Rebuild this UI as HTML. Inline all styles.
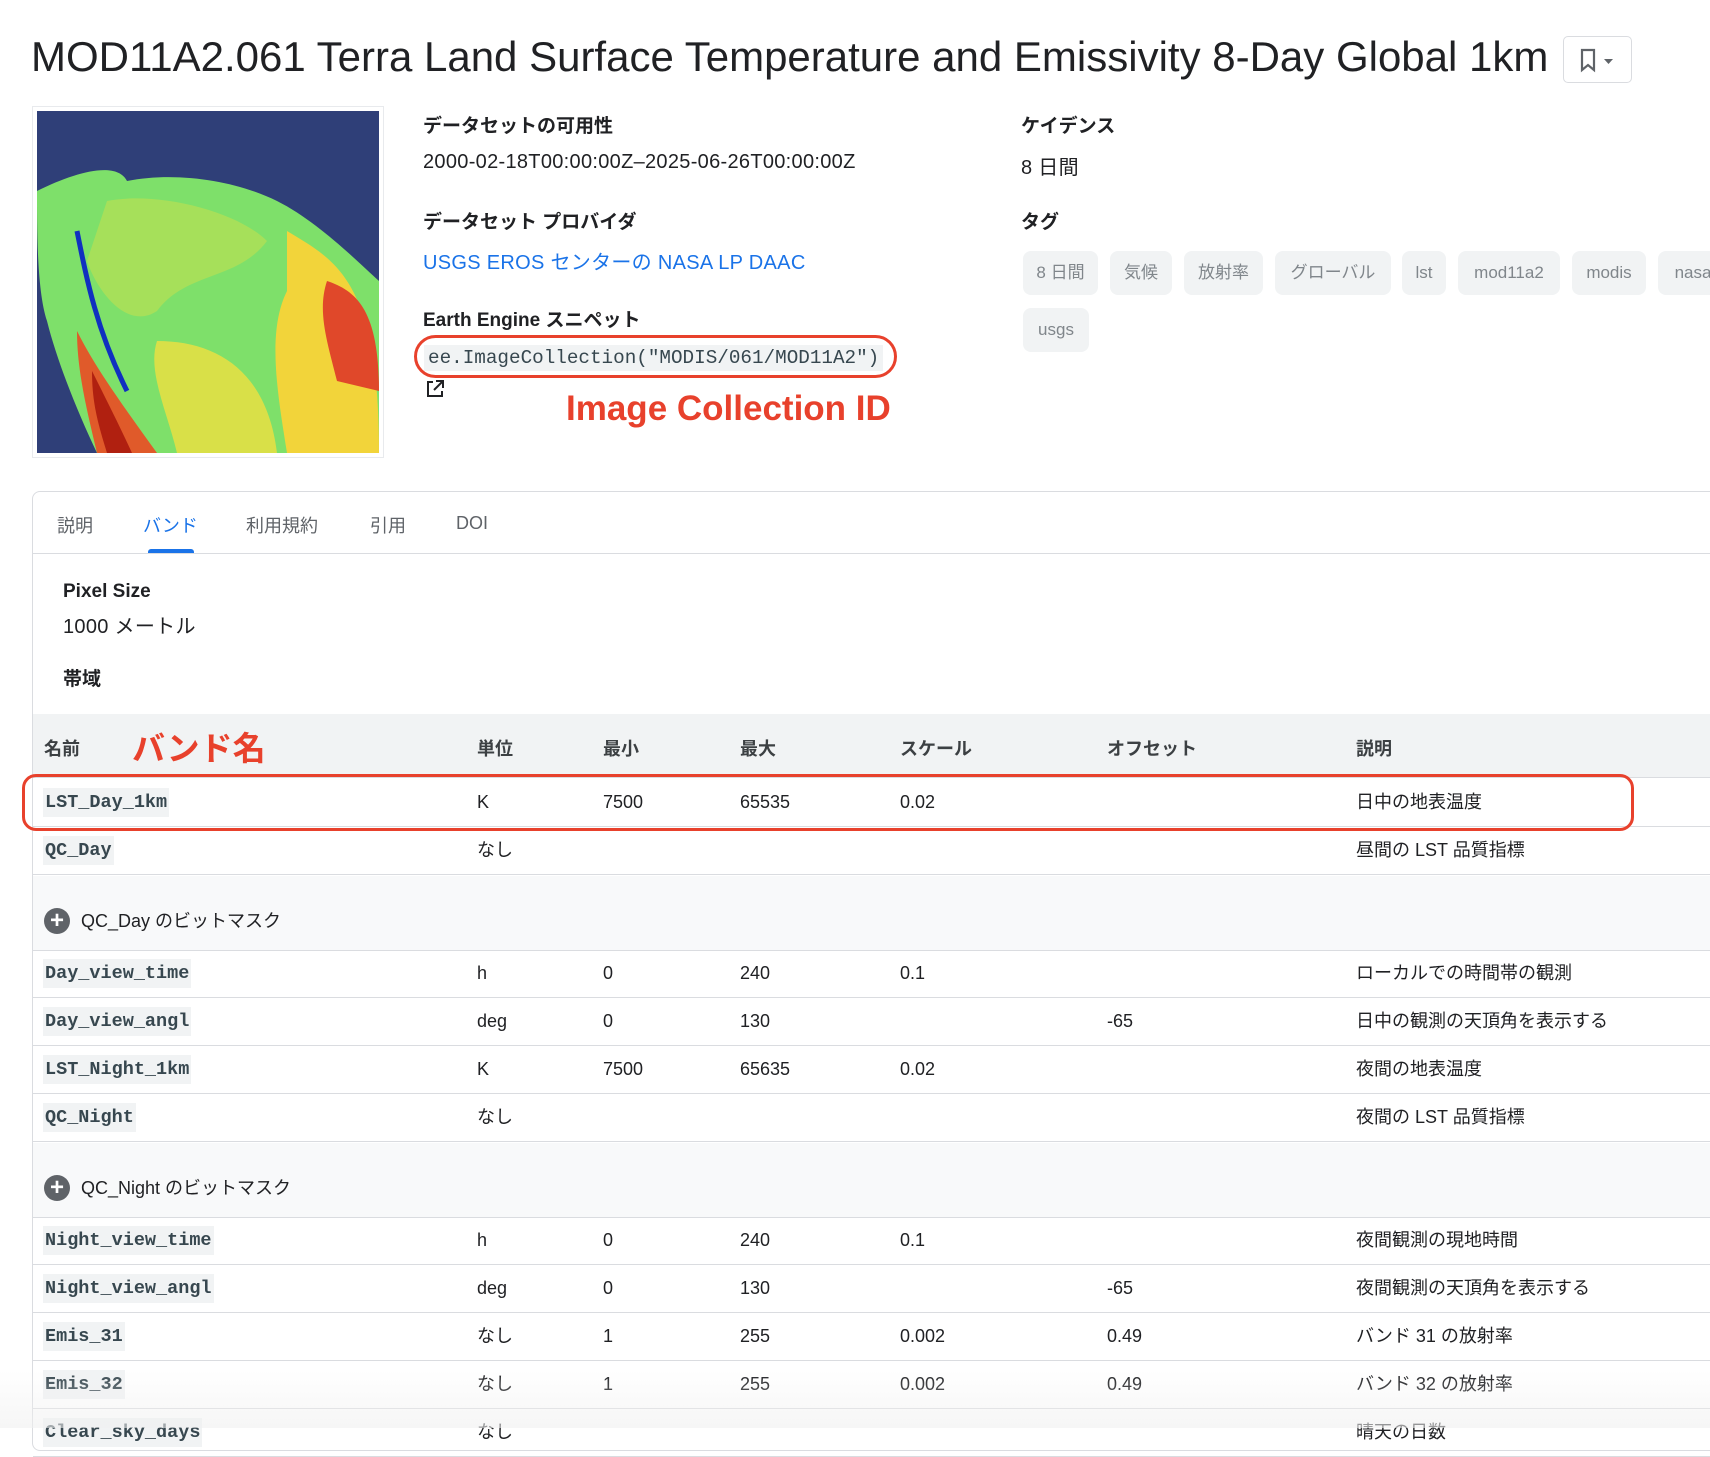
<!DOCTYPE html>
<html><head><meta charset="utf-8"><style>
*{margin:0;padding:0;box-sizing:border-box}
body{width:1710px;height:1428px;overflow:hidden;background:#fff;font-family:"Liberation Sans","Noto Sans CJK JP",sans-serif;color:#202124;position:relative}
.a{position:absolute;white-space:nowrap}
.lbl{font-weight:bold;font-size:19px}
.val{font-size:20px;letter-spacing:0.3px}
.chip{position:absolute;height:44px;line-height:44px;background:#f1f3f4;border-radius:8px;color:#80868b;font-size:17px;text-align:center}
.mono{font-family:"Liberation Mono",monospace}
.row{position:absolute;left:33px;width:1677px;border-bottom:1px solid #dadce0;height:48px}
.row span{position:absolute;top:0;line-height:47px;font-size:18px}
.row .n{left:10px;top:9px;line-height:29px;font-family:"Liberation Mono",monospace;font-weight:bold;font-size:18.5px;background:#f1f3f4;padding:0 2px;color:#37474f}
.bm{position:absolute;left:33px;width:1677px;height:75px;background:#f8f9fa;border-bottom:1px solid #dadce0}
.bm .pl{position:absolute;left:11px;top:32px;width:26px;height:26px;border-radius:50%;background:#5f6368;color:#fff;font-size:24px;line-height:25px;text-align:center;font-weight:bold}
.bm span{position:absolute;left:48px;top:32px;font-size:18px;line-height:26px}
</style></head><body>
<div class="a" style="left:31px;top:30px;font-size:42px;line-height:54px">MOD11A2.061 Terra Land Surface Temperature and Emissivity 8-Day Global 1km</div>
<div class="a" style="left:1563px;top:36px;width:69px;height:47px;border:1px solid #dadce0;border-radius:5px">
<svg width="69" height="47"><path d="M18 13h12v20l-6-5-6 5z" fill="none" stroke="#5f6368" stroke-width="2.2"/><path d="M40 22h9l-4.5 5z" fill="#5f6368"/></svg></div>

<div class="a" style="left:32px;top:106px;width:352px;height:352px;border:1px solid #e8eaed;padding:4px">
<svg width="342" height="342" viewBox="0 0 342 342">
<rect width="342" height="342" fill="#2f3f78"/>
<path d="M0 80 C40 60 80 50 90 70 C140 60 200 70 240 90 C280 110 320 150 342 170 L342 342 L60 342 C40 300 20 250 10 210 C0 180 0 120 0 80Z" fill="#7ee06a"/>
<path d="M70 90 C120 80 200 100 230 130 C200 170 150 160 120 200 C90 220 60 180 50 150Z" fill="#a6e05a"/>
<path d="M250 120 C300 150 342 170 342 342 L250 342 C240 280 230 220 250 180 Z" fill="#f2d43a"/>
<path d="M290 170 C320 180 342 200 342 280 L300 270 C290 230 280 200 290 170Z" fill="#e0482a"/>
<path d="M40 220 C60 260 90 300 120 342 L60 342 C50 300 40 260 40 220Z" fill="#e05a2a"/>
<path d="M55 260 C70 290 85 320 95 342 L70 342 C60 310 55 290 55 260Z" fill="#b02010"/>
<path d="M120 230 C180 230 230 260 240 342 L140 342 C130 300 110 260 120 230Z" fill="#f0e040" opacity=".8"/>
<path d="M40 120 C50 170 60 220 90 280" stroke="#1030c0" stroke-width="5" fill="none"/>
</svg></div>

<div class="a lbl" style="left:423px;top:111px">データセットの可用性</div>
<div class="a val" style="left:423px;top:151px">2000-02-18T00:00:00Z–2025-06-26T00:00:00Z</div>
<div class="a lbl" style="left:423px;top:207px">データセット プロバイダ</div>
<div class="a val" style="left:423px;top:246px;color:#1a73e8">USGS EROS センターの NASA LP DAAC</div>
<div class="a lbl" style="left:423px;top:305px">Earth Engine スニペット</div>
<div class="a mono" style="left:424px;top:345px;background:#f1f3f4;padding:2px 4px;font-size:19.3px;color:#37474f">ee.ImageCollection("MODIS/061/MOD11A2")</div>
<div class="a" style="left:414px;top:335px;width:483px;height:43px;border:3px solid #e8412c;border-radius:22px"></div>
<svg class="a" style="left:424px;top:378px" width="22" height="22"><path d="M9 4H4v14h14v-5M12 3h7v7M19 3l-9 9" fill="none" stroke="#202124" stroke-width="2"/></svg>
<div class="a" style="left:566px;top:389px;font-size:35px;font-weight:bold;color:#e8412c">Image Collection ID</div>

<div class="a lbl" style="left:1021px;top:111px">ケイデンス</div>
<div class="a val" style="left:1021px;top:151px">8 日間</div>
<div class="a lbl" style="left:1021px;top:207px">タグ</div>
<div class="chip" style="left:1023px;top:251px;width:75px">8 日間</div>
<div class="chip" style="left:1110px;top:251px;width:62px">気候</div>
<div class="chip" style="left:1184px;top:251px;width:79px">放射率</div>
<div class="chip" style="left:1275px;top:251px;width:116px">グローバル</div>
<div class="chip" style="left:1402px;top:251px;width:44px">lst</div>
<div class="chip" style="left:1458px;top:251px;width:102px">mod11a2</div>
<div class="chip" style="left:1572px;top:251px;width:74px">modis</div>
<div class="chip" style="left:1658px;top:251px;width:70px">nasa</div>
<div class="chip" style="left:1023px;top:308px;width:66px">usgs</div>

<div class="a" style="left:32px;top:491px;width:1700px;height:960px;border:1px solid #dadce0;border-radius:8px"></div>
<div class="a" style="left:33px;top:553px;width:1677px;height:1px;background:#dadce0"></div>
<div class="a" style="left:57px;top:512px;font-size:18px;color:#5f6368">説明</div>
<div class="a" style="left:143px;top:512px;font-size:18px;color:#1a73e8">バンド</div>
<div class="a" style="left:148px;top:549px;width:46px;height:4px;background:#1a73e8;border-radius:3px 3px 0 0"></div>
<div class="a" style="left:246px;top:512px;font-size:18px;color:#5f6368">利用規約</div>
<div class="a" style="left:370px;top:512px;font-size:18px;color:#5f6368">引用</div>
<div class="a" style="left:456px;top:513px;font-size:18px;color:#5f6368">DOI</div>

<div class="a lbl" style="left:63px;top:581px">Pixel Size</div>
<div class="a val" style="left:63px;top:610px">1000 メートル</div>
<div class="a lbl" style="left:63px;top:664px">帯域</div>

<div class="a" style="left:33px;top:714px;width:1677px;height:64px;background:#f1f3f4;border-bottom:1px solid #dadce0"></div>
<div class="a" style="top:735px;left:44px;font-size:18px;font-weight:bold;color:#3c4043">名前</div>
<div class="a" style="top:722px;left:132px;font-size:33px;font-weight:bold;color:#e8412c">バンド名</div>
<div class="a" style="top:735px;left:477px;font-size:18px;font-weight:bold;color:#3c4043">単位</div>
<div class="a" style="top:735px;left:603px;font-size:18px;font-weight:bold;color:#3c4043">最小</div>
<div class="a" style="top:735px;left:740px;font-size:18px;font-weight:bold;color:#3c4043">最大</div>
<div class="a" style="top:735px;left:900px;font-size:18px;font-weight:bold;color:#3c4043">スケール</div>
<div class="a" style="top:735px;left:1107px;font-size:18px;font-weight:bold;color:#3c4043">オフセット</div>
<div class="a" style="top:735px;left:1356px;font-size:18px;font-weight:bold;color:#3c4043">説明</div>

<div class="row" style="top:779px"><span class="n">LST_Day_1km</span><span style="left:444px">K</span><span style="left:570px">7500</span><span style="left:707px">65535</span><span style="left:867px">0.02</span><span style="left:1323px">日中の地表温度</span></div>
<div class="a" style="left:22px;top:774px;width:1612px;height:57px;border:3px solid #e8412c;border-radius:14px"></div>
<div class="row" style="top:827px"><span class="n">QC_Day</span><span style="left:444px">なし</span><span style="left:1323px">昼間の LST 品質指標</span></div>
<div class="bm" style="top:876px"><div class="pl">+</div><span>QC_Day のビットマスク</span></div>
<div class="row" style="top:950px"><span class="n">Day_view_time</span><span style="left:444px">h</span><span style="left:570px">0</span><span style="left:707px">240</span><span style="left:867px">0.1</span><span style="left:1323px">ローカルでの時間帯の観測</span></div>
<div class="row" style="top:998px"><span class="n">Day_view_angl</span><span style="left:444px">deg</span><span style="left:570px">0</span><span style="left:707px">130</span><span style="left:1074px">-65</span><span style="left:1323px">日中の観測の天頂角を表示する</span></div>
<div class="row" style="top:1046px"><span class="n">LST_Night_1km</span><span style="left:444px">K</span><span style="left:570px">7500</span><span style="left:707px">65635</span><span style="left:867px">0.02</span><span style="left:1323px">夜間の地表温度</span></div>
<div class="row" style="top:1094px"><span class="n">QC_Night</span><span style="left:444px">なし</span><span style="left:1323px">夜間の LST 品質指標</span></div>
<div class="bm" style="top:1143px"><div class="pl">+</div><span>QC_Night のビットマスク</span></div>
<div class="row" style="top:1217px"><span class="n">Night_view_time</span><span style="left:444px">h</span><span style="left:570px">0</span><span style="left:707px">240</span><span style="left:867px">0.1</span><span style="left:1323px">夜間観測の現地時間</span></div>
<div class="row" style="top:1265px"><span class="n">Night_view_angl</span><span style="left:444px">deg</span><span style="left:570px">0</span><span style="left:707px">130</span><span style="left:1074px">-65</span><span style="left:1323px">夜間観測の天頂角を表示する</span></div>
<div class="row" style="top:1313px"><span class="n">Emis_31</span><span style="left:444px">なし</span><span style="left:570px">1</span><span style="left:707px">255</span><span style="left:867px">0.002</span><span style="left:1074px">0.49</span><span style="left:1323px">バンド 31 の放射率</span></div>
<div class="row" style="top:1361px"><span class="n">Emis_32</span><span style="left:444px">なし</span><span style="left:570px">1</span><span style="left:707px">255</span><span style="left:867px">0.002</span><span style="left:1074px">0.49</span><span style="left:1323px">バンド 32 の放射率</span></div>
<div class="row" style="top:1409px"><span class="n">Clear_sky_days</span><span style="left:444px">なし</span><span style="left:1323px">晴天の日数</span></div>
<div class="a" style="left:0;top:1370px;width:1710px;height:58px;background:linear-gradient(rgba(255,255,255,0),rgba(240,240,240,.6))"></div>
</body></html>
